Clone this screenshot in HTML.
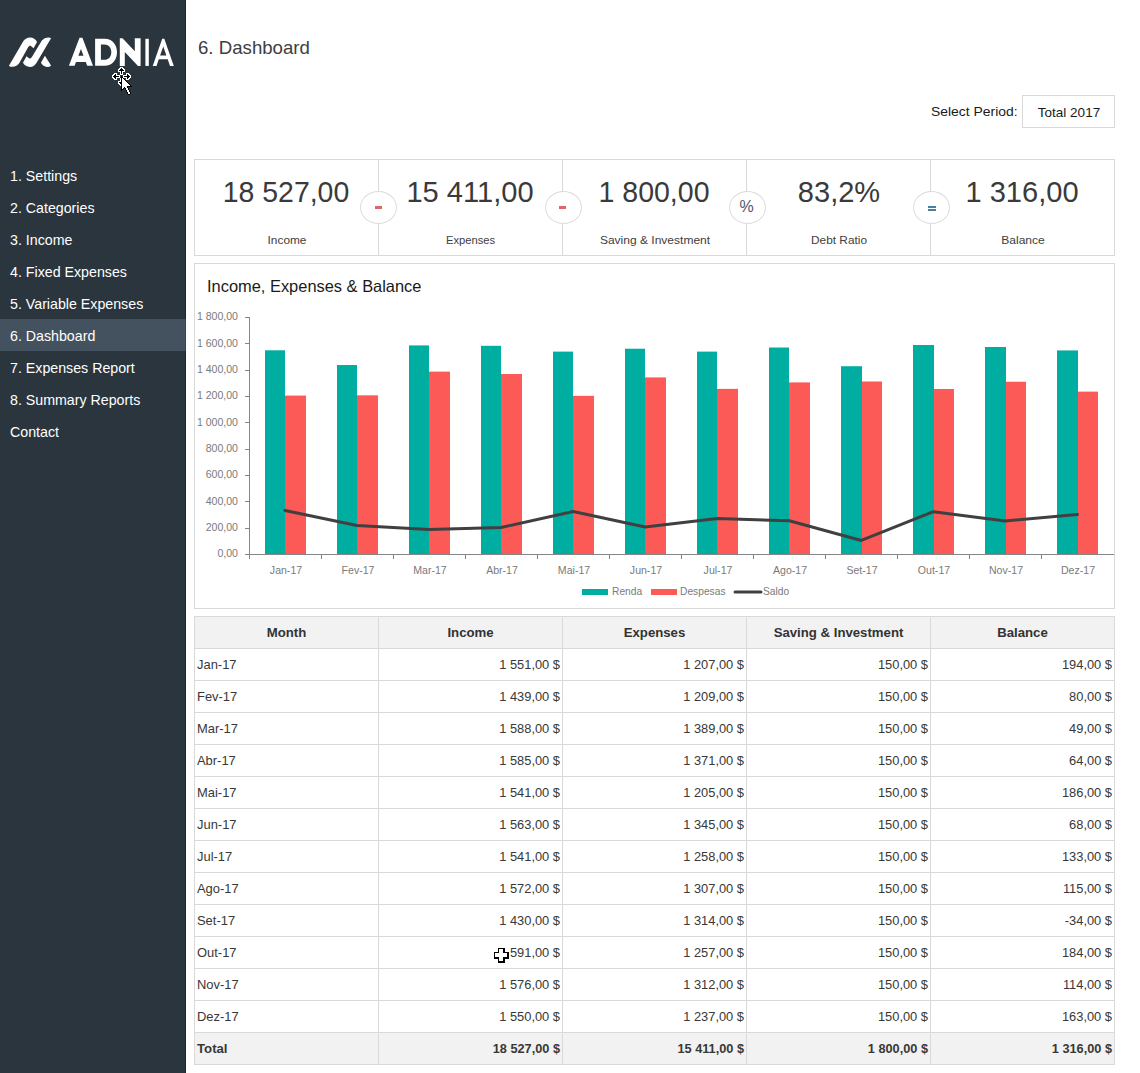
<!DOCTYPE html>
<html><head><meta charset="utf-8"><title>Dashboard</title>
<style>
html,body{margin:0;padding:0;}
body{width:1140px;height:1073px;position:relative;overflow:hidden;background:#ffffff;font-family:"Liberation Sans", sans-serif;}
.t{position:absolute;white-space:nowrap;font-family:"Liberation Sans", sans-serif;}
.box{position:absolute;border:1px solid #d9d9d9;background:transparent;}
</style></head><body>
<div style="position:absolute;left:0;top:0;width:186px;height:1073px;background:#2b353e"></div>
<div style="position:absolute;left:185px;top:0;width:1px;height:1073px;background:#1f2831"></div>
<div style="position:absolute;left:0;top:319px;width:185px;height:32px;background:#44525f"></div>
<div style="position:absolute;left:185px;top:319px;width:1px;height:32px;background:#34475a"></div>
<div class="t" style="left:10.00px;top:168.73px;width:600px;text-align:left;font-size:14.5px;line-height:14.5px;color:#ffffff;font-weight:normal;transform:scaleX(0.98);transform-origin:left 0;">1. Settings</div>
<div class="t" style="left:10.00px;top:200.73px;width:600px;text-align:left;font-size:14.5px;line-height:14.5px;color:#ffffff;font-weight:normal;transform:scaleX(0.98);transform-origin:left 0;">2. Categories</div>
<div class="t" style="left:10.00px;top:232.73px;width:600px;text-align:left;font-size:14.5px;line-height:14.5px;color:#ffffff;font-weight:normal;transform:scaleX(0.98);transform-origin:left 0;">3. Income</div>
<div class="t" style="left:10.00px;top:264.73px;width:600px;text-align:left;font-size:14.5px;line-height:14.5px;color:#ffffff;font-weight:normal;transform:scaleX(0.98);transform-origin:left 0;">4. Fixed Expenses</div>
<div class="t" style="left:10.00px;top:296.73px;width:600px;text-align:left;font-size:14.5px;line-height:14.5px;color:#ffffff;font-weight:normal;transform:scaleX(0.98);transform-origin:left 0;">5. Variable Expenses</div>
<div class="t" style="left:10.00px;top:328.73px;width:600px;text-align:left;font-size:14.5px;line-height:14.5px;color:#ffffff;font-weight:normal;transform:scaleX(0.98);transform-origin:left 0;">6. Dashboard</div>
<div class="t" style="left:10.00px;top:360.73px;width:600px;text-align:left;font-size:14.5px;line-height:14.5px;color:#ffffff;font-weight:normal;transform:scaleX(0.98);transform-origin:left 0;">7. Expenses Report</div>
<div class="t" style="left:10.00px;top:392.73px;width:600px;text-align:left;font-size:14.5px;line-height:14.5px;color:#ffffff;font-weight:normal;transform:scaleX(0.98);transform-origin:left 0;">8. Summary Reports</div>
<div class="t" style="left:10.00px;top:424.73px;width:600px;text-align:left;font-size:14.5px;line-height:14.5px;color:#ffffff;font-weight:normal;transform:scaleX(0.98);transform-origin:left 0;">Contact</div>
<svg style="position:absolute;left:0;top:0" width="186" height="110" viewBox="0 0 186 110">
<g fill="#ffffff">
<g transform="translate(5,33) scale(0.04386)">
<path d="M90,745 L420,185 Q480,105 570,105 Q680,110 730,205 L650,350 L585,292 L560,290 L530,318 L330,680 Q270,770 170,772 Q110,772 90,745 Z"/>
<path d="M1050,120 L730,660 Q670,772 570,775 Q460,772 410,680 L490,530 L555,582 L580,582 L610,552 L840,170 Q900,105 980,105 Q1040,105 1050,120 Z"/>
<path d="M910,520 L1050,740 Q1030,775 960,775 Q870,770 820,680 Z"/>
</g>
<path fill-rule="evenodd" d="M68.9,65.8 L79.5,37.8 L82.4,37.8 L93,65.8 L87.2,65.8 L85.8,62 L76.0,62 L74.6,65.8 Z M78.4,55.7 L80.95,49.1 L83.5,55.7 Z"/>
<path fill-rule="evenodd" d="M95.1,38.8 L104.5,38.8 C112.5,38.8 117,45 117,52.3 C117,59.6 112.5,65.8 104.5,65.8 L95.1,65.8 Z M100.9,44.6 L104.2,44.6 C108.8,44.6 111.3,48 111.3,52.2 C111.3,56.5 108.8,59.8 104.2,59.8 L100.9,59.8 Z"/>
<path d="M119.8,65.9 L119.8,38.3 L122.5,38.3 L134.8,51.3 L134.8,38.3 L140.6,38.3 L140.6,65.9 L138,65.9 L124.8,52 L124.8,65.9 Z"/>
<rect x="145.4" y="38.8" width="3.4" height="27.1"/>
<path fill-rule="evenodd" d="M152.7,65.9 L162.2,38.8 L164.3,38.8 L173.8,65.9 L170,65.9 L167.7,59.3 L158.8,59.3 L156.5,65.9 Z M160.1,55.6 L163.25,46.6 L166.4,55.6 Z"/>
</g>
</svg>
<div class="t" style="left:198.00px;top:39.09px;width:600px;text-align:left;font-size:18.2px;line-height:18.2px;color:#404040;font-weight:normal;transform:scaleX(1.025);transform-origin:left 0;">6. Dashboard</div>
<div class="t" style="left:930.50px;top:104.57px;width:600px;text-align:left;font-size:13.5px;line-height:13.5px;color:#1a1a1a;font-weight:normal;transform:scaleX(1.03);transform-origin:left 0;">Select Period:</div>
<div class="box" style="left:1022px;top:95px;width:91px;height:31px"></div>
<div class="t" style="left:769.00px;top:105.57px;width:600px;text-align:center;font-size:13.5px;line-height:13.5px;color:#1a1a1a;font-weight:normal;">Total 2017</div>
<div class="box" style="left:194px;top:159px;width:919px;height:95px"></div>
<div style="position:absolute;left:378px;top:160px;width:1px;height:95px;background:#d9d9d9"></div>
<div style="position:absolute;left:562px;top:160px;width:1px;height:95px;background:#d9d9d9"></div>
<div style="position:absolute;left:746px;top:160px;width:1px;height:95px;background:#d9d9d9"></div>
<div style="position:absolute;left:930px;top:160px;width:1px;height:95px;background:#d9d9d9"></div>
<div class="t" style="left:-14.00px;top:177.03px;width:600px;text-align:center;font-size:29.5px;line-height:29.5px;color:#3a3a3a;font-weight:normal;transform:scaleX(0.964);transform-origin:center 0;">18 527,00</div>
<div class="t" style="left:-13.50px;top:234.52px;width:600px;text-align:center;font-size:11.2px;line-height:11.2px;color:#404040;font-weight:normal;transform:scaleX(1.06);transform-origin:center 0;">Income</div>
<div class="t" style="left:170.00px;top:177.03px;width:600px;text-align:center;font-size:29.5px;line-height:29.5px;color:#3a3a3a;font-weight:normal;transform:scaleX(0.985);transform-origin:center 0;">15 411,00</div>
<div class="t" style="left:170.50px;top:234.52px;width:600px;text-align:center;font-size:11.2px;line-height:11.2px;color:#404040;font-weight:normal;">Expenses</div>
<div class="t" style="left:353.80px;top:177.03px;width:600px;text-align:center;font-size:29.5px;line-height:29.5px;color:#3a3a3a;font-weight:normal;transform:scaleX(0.967);transform-origin:center 0;">1 800,00</div>
<div class="t" style="left:354.50px;top:234.52px;width:600px;text-align:center;font-size:11.2px;line-height:11.2px;color:#404040;font-weight:normal;transform:scaleX(1.074);transform-origin:center 0;">Saving &amp; Investment</div>
<div class="t" style="left:538.80px;top:177.03px;width:600px;text-align:center;font-size:29.5px;line-height:29.5px;color:#3a3a3a;font-weight:normal;transform:scaleX(0.984);transform-origin:center 0;">83,2%</div>
<div class="t" style="left:538.50px;top:234.52px;width:600px;text-align:center;font-size:11.2px;line-height:11.2px;color:#404040;font-weight:normal;transform:scaleX(1.06);transform-origin:center 0;">Debt Ratio</div>
<div class="t" style="left:722.00px;top:177.03px;width:600px;text-align:center;font-size:29.5px;line-height:29.5px;color:#3a3a3a;font-weight:normal;transform:scaleX(0.985);transform-origin:center 0;">1 316,00</div>
<div class="t" style="left:722.50px;top:234.52px;width:600px;text-align:center;font-size:11.2px;line-height:11.2px;color:#404040;font-weight:normal;transform:scaleX(1.08);transform-origin:center 0;">Balance</div>
<div style="position:absolute;left:360.0px;top:191px;width:35px;height:31px;border:1px solid #dcdcdc;border-radius:50%;background:#fff"></div>
<div style="position:absolute;left:544.5px;top:191px;width:35px;height:31px;border:1px solid #dcdcdc;border-radius:50%;background:#fff"></div>
<div style="position:absolute;left:728.5px;top:191px;width:35px;height:31px;border:1px solid #dcdcdc;border-radius:50%;background:#fff"></div>
<div style="position:absolute;left:913.0px;top:191px;width:35px;height:31px;border:1px solid #dcdcdc;border-radius:50%;background:#fff"></div>
<div style="position:absolute;left:375px;top:206px;width:7px;height:3px;background:#e06666"></div>
<div style="position:absolute;left:559px;top:206px;width:7px;height:3px;background:#e06666"></div>
<div class="t" style="left:446.50px;top:199.06px;width:600px;text-align:center;font-size:16px;line-height:16px;color:#505866;font-weight:normal;">%</div>
<div style="position:absolute;left:928px;top:206px;width:8px;height:2px;background:#4a7fa5"></div>
<div style="position:absolute;left:928px;top:209px;width:8px;height:2px;background:#4a7fa5"></div>
<div class="box" style="left:194px;top:263px;width:919px;height:344px"></div>
<div class="t" style="left:207.00px;top:278.03px;width:600px;text-align:left;font-size:16.5px;line-height:16.5px;color:#1a1a1a;font-weight:normal;transform:scaleX(0.995);transform-origin:left 0;">Income, Expenses &amp; Balance</div>
<svg style="position:absolute;left:0;top:0" width="1140" height="1073">
<rect x="265" y="350.29" width="20" height="204.21" fill="#00ada1"/>
<rect x="285" y="395.58" width="21" height="158.92" fill="#fc5a56"/>
<rect x="337" y="365.03" width="20" height="189.47" fill="#00ada1"/>
<rect x="357" y="395.32" width="21" height="159.18" fill="#fc5a56"/>
<rect x="409" y="345.41" width="20" height="209.09" fill="#00ada1"/>
<rect x="429" y="371.62" width="21" height="182.88" fill="#fc5a56"/>
<rect x="481" y="345.81" width="20" height="208.69" fill="#00ada1"/>
<rect x="501" y="373.99" width="21" height="180.51" fill="#fc5a56"/>
<rect x="553" y="351.60" width="20" height="202.90" fill="#00ada1"/>
<rect x="573" y="395.84" width="21" height="158.66" fill="#fc5a56"/>
<rect x="625" y="348.71" width="20" height="205.79" fill="#00ada1"/>
<rect x="645" y="377.41" width="21" height="177.09" fill="#fc5a56"/>
<rect x="697" y="351.60" width="20" height="202.90" fill="#00ada1"/>
<rect x="717" y="388.86" width="21" height="165.64" fill="#fc5a56"/>
<rect x="769" y="347.52" width="20" height="206.98" fill="#00ada1"/>
<rect x="789" y="382.41" width="21" height="172.09" fill="#fc5a56"/>
<rect x="841" y="366.22" width="21" height="188.28" fill="#00ada1"/>
<rect x="862" y="381.49" width="20" height="173.01" fill="#fc5a56"/>
<rect x="913" y="345.02" width="21" height="209.48" fill="#00ada1"/>
<rect x="934" y="389.00" width="20" height="165.50" fill="#fc5a56"/>
<rect x="985" y="346.99" width="21" height="207.51" fill="#00ada1"/>
<rect x="1006" y="381.75" width="20" height="172.75" fill="#fc5a56"/>
<rect x="1057" y="350.42" width="21" height="204.08" fill="#00ada1"/>
<rect x="1078" y="391.63" width="20" height="162.87" fill="#fc5a56"/>
<line x1="249.5" y1="317" x2="249.5" y2="554.5" stroke="#868686" stroke-width="1"/>
<line x1="245" y1="554.5" x2="1114" y2="554.5" stroke="#868686" stroke-width="1"/>
<line x1="245" y1="554.5" x2="249.5" y2="554.5" stroke="#868686" stroke-width="1"/>
<line x1="245" y1="528.5" x2="249.5" y2="528.5" stroke="#868686" stroke-width="1"/>
<line x1="245" y1="501.5" x2="249.5" y2="501.5" stroke="#868686" stroke-width="1"/>
<line x1="245" y1="475.5" x2="249.5" y2="475.5" stroke="#868686" stroke-width="1"/>
<line x1="245" y1="449.5" x2="249.5" y2="449.5" stroke="#868686" stroke-width="1"/>
<line x1="245" y1="422.5" x2="249.5" y2="422.5" stroke="#868686" stroke-width="1"/>
<line x1="245" y1="396.5" x2="249.5" y2="396.5" stroke="#868686" stroke-width="1"/>
<line x1="245" y1="370.5" x2="249.5" y2="370.5" stroke="#868686" stroke-width="1"/>
<line x1="245" y1="343.5" x2="249.5" y2="343.5" stroke="#868686" stroke-width="1"/>
<line x1="245" y1="317.5" x2="249.5" y2="317.5" stroke="#868686" stroke-width="1"/>
<line x1="249.5" y1="554.5" x2="249.5" y2="559" stroke="#868686" stroke-width="1"/>
<line x1="321.5" y1="554.5" x2="321.5" y2="559" stroke="#868686" stroke-width="1"/>
<line x1="393.5" y1="554.5" x2="393.5" y2="559" stroke="#868686" stroke-width="1"/>
<line x1="465.5" y1="554.5" x2="465.5" y2="559" stroke="#868686" stroke-width="1"/>
<line x1="537.5" y1="554.5" x2="537.5" y2="559" stroke="#868686" stroke-width="1"/>
<line x1="609.5" y1="554.5" x2="609.5" y2="559" stroke="#868686" stroke-width="1"/>
<line x1="681.5" y1="554.5" x2="681.5" y2="559" stroke="#868686" stroke-width="1"/>
<line x1="753.5" y1="554.5" x2="753.5" y2="559" stroke="#868686" stroke-width="1"/>
<line x1="825.5" y1="554.5" x2="825.5" y2="559" stroke="#868686" stroke-width="1"/>
<line x1="897.5" y1="554.5" x2="897.5" y2="559" stroke="#868686" stroke-width="1"/>
<line x1="969.5" y1="554.5" x2="969.5" y2="559" stroke="#868686" stroke-width="1"/>
<line x1="1041.5" y1="554.5" x2="1041.5" y2="559" stroke="#868686" stroke-width="1"/>
<polyline points="285.00,510.41 357.04,525.42 429.08,529.50 501.12,527.52 573.16,511.46 645.20,527.00 717.24,518.44 789.28,520.81 861.32,540.43 933.36,511.72 1005.40,520.94 1077.44,514.49" fill="none" stroke="#404040" stroke-width="3" stroke-linejoin="round" stroke-linecap="round"/>
<rect x="582" y="589" width="26" height="6" fill="#00ada1"/>
<rect x="651" y="589" width="26" height="6" fill="#fc5a56"/>
<line x1="735" y1="592" x2="761" y2="592" stroke="#404040" stroke-width="3" stroke-linecap="round"/>
</svg>
<div class="t" style="left:-362.00px;top:548.49px;width:600px;text-align:right;font-size:11px;line-height:11px;color:#7a7a7a;font-weight:normal;transform:scaleX(0.96);transform-origin:right 0;">0,00</div>
<div class="t" style="left:-362.00px;top:522.16px;width:600px;text-align:right;font-size:11px;line-height:11px;color:#7a7a7a;font-weight:normal;transform:scaleX(0.96);transform-origin:right 0;">200,00</div>
<div class="t" style="left:-362.00px;top:495.82px;width:600px;text-align:right;font-size:11px;line-height:11px;color:#7a7a7a;font-weight:normal;transform:scaleX(0.96);transform-origin:right 0;">400,00</div>
<div class="t" style="left:-362.00px;top:469.49px;width:600px;text-align:right;font-size:11px;line-height:11px;color:#7a7a7a;font-weight:normal;transform:scaleX(0.96);transform-origin:right 0;">600,00</div>
<div class="t" style="left:-362.00px;top:443.16px;width:600px;text-align:right;font-size:11px;line-height:11px;color:#7a7a7a;font-weight:normal;transform:scaleX(0.96);transform-origin:right 0;">800,00</div>
<div class="t" style="left:-362.00px;top:416.82px;width:600px;text-align:right;font-size:11px;line-height:11px;color:#7a7a7a;font-weight:normal;transform:scaleX(0.96);transform-origin:right 0;">1 000,00</div>
<div class="t" style="left:-362.00px;top:390.49px;width:600px;text-align:right;font-size:11px;line-height:11px;color:#7a7a7a;font-weight:normal;transform:scaleX(0.96);transform-origin:right 0;">1 200,00</div>
<div class="t" style="left:-362.00px;top:364.16px;width:600px;text-align:right;font-size:11px;line-height:11px;color:#7a7a7a;font-weight:normal;transform:scaleX(0.96);transform-origin:right 0;">1 400,00</div>
<div class="t" style="left:-362.00px;top:337.82px;width:600px;text-align:right;font-size:11px;line-height:11px;color:#7a7a7a;font-weight:normal;transform:scaleX(0.96);transform-origin:right 0;">1 600,00</div>
<div class="t" style="left:-362.00px;top:311.49px;width:600px;text-align:right;font-size:11px;line-height:11px;color:#7a7a7a;font-weight:normal;transform:scaleX(0.96);transform-origin:right 0;">1 800,00</div>
<div class="t" style="left:-14.50px;top:564.69px;width:600px;text-align:center;font-size:11px;line-height:11px;color:#7a7a7a;font-weight:normal;transform:scaleX(0.96);transform-origin:center 0;">Jan-17</div>
<div class="t" style="left:57.54px;top:564.69px;width:600px;text-align:center;font-size:11px;line-height:11px;color:#7a7a7a;font-weight:normal;transform:scaleX(0.96);transform-origin:center 0;">Fev-17</div>
<div class="t" style="left:129.58px;top:564.69px;width:600px;text-align:center;font-size:11px;line-height:11px;color:#7a7a7a;font-weight:normal;transform:scaleX(0.96);transform-origin:center 0;">Mar-17</div>
<div class="t" style="left:201.62px;top:564.69px;width:600px;text-align:center;font-size:11px;line-height:11px;color:#7a7a7a;font-weight:normal;transform:scaleX(0.96);transform-origin:center 0;">Abr-17</div>
<div class="t" style="left:273.66px;top:564.69px;width:600px;text-align:center;font-size:11px;line-height:11px;color:#7a7a7a;font-weight:normal;transform:scaleX(0.96);transform-origin:center 0;">Mai-17</div>
<div class="t" style="left:345.70px;top:564.69px;width:600px;text-align:center;font-size:11px;line-height:11px;color:#7a7a7a;font-weight:normal;transform:scaleX(0.96);transform-origin:center 0;">Jun-17</div>
<div class="t" style="left:417.74px;top:564.69px;width:600px;text-align:center;font-size:11px;line-height:11px;color:#7a7a7a;font-weight:normal;transform:scaleX(0.96);transform-origin:center 0;">Jul-17</div>
<div class="t" style="left:489.78px;top:564.69px;width:600px;text-align:center;font-size:11px;line-height:11px;color:#7a7a7a;font-weight:normal;transform:scaleX(0.96);transform-origin:center 0;">Ago-17</div>
<div class="t" style="left:561.82px;top:564.69px;width:600px;text-align:center;font-size:11px;line-height:11px;color:#7a7a7a;font-weight:normal;transform:scaleX(0.96);transform-origin:center 0;">Set-17</div>
<div class="t" style="left:633.86px;top:564.69px;width:600px;text-align:center;font-size:11px;line-height:11px;color:#7a7a7a;font-weight:normal;transform:scaleX(0.96);transform-origin:center 0;">Out-17</div>
<div class="t" style="left:705.90px;top:564.69px;width:600px;text-align:center;font-size:11px;line-height:11px;color:#7a7a7a;font-weight:normal;transform:scaleX(0.96);transform-origin:center 0;">Nov-17</div>
<div class="t" style="left:777.94px;top:564.69px;width:600px;text-align:center;font-size:11px;line-height:11px;color:#7a7a7a;font-weight:normal;transform:scaleX(0.96);transform-origin:center 0;">Dez-17</div>
<div class="t" style="left:611.50px;top:585.69px;width:600px;text-align:left;font-size:11px;line-height:11px;color:#7a7a7a;font-weight:normal;transform:scaleX(0.93);transform-origin:left 0;">Renda</div>
<div class="t" style="left:679.50px;top:585.69px;width:600px;text-align:left;font-size:11px;line-height:11px;color:#7a7a7a;font-weight:normal;transform:scaleX(0.93);transform-origin:left 0;">Despesas</div>
<div class="t" style="left:763.00px;top:585.69px;width:600px;text-align:left;font-size:11px;line-height:11px;color:#7a7a7a;font-weight:normal;transform:scaleX(0.93);transform-origin:left 0;">Saldo</div>
<div style="position:absolute;left:195px;top:617px;width:919px;height:31px;background:#f2f2f2"></div>
<div style="position:absolute;left:195px;top:1033px;width:919px;height:31px;background:#f2f2f2"></div>
<div style="position:absolute;left:194px;top:616px;width:921px;height:1px;background:#d9d9d9"></div>
<div style="position:absolute;left:194px;top:648px;width:921px;height:1px;background:#d9d9d9"></div>
<div style="position:absolute;left:194px;top:680px;width:921px;height:1px;background:#d9d9d9"></div>
<div style="position:absolute;left:194px;top:712px;width:921px;height:1px;background:#d9d9d9"></div>
<div style="position:absolute;left:194px;top:744px;width:921px;height:1px;background:#d9d9d9"></div>
<div style="position:absolute;left:194px;top:776px;width:921px;height:1px;background:#d9d9d9"></div>
<div style="position:absolute;left:194px;top:808px;width:921px;height:1px;background:#d9d9d9"></div>
<div style="position:absolute;left:194px;top:840px;width:921px;height:1px;background:#d9d9d9"></div>
<div style="position:absolute;left:194px;top:872px;width:921px;height:1px;background:#d9d9d9"></div>
<div style="position:absolute;left:194px;top:904px;width:921px;height:1px;background:#d9d9d9"></div>
<div style="position:absolute;left:194px;top:936px;width:921px;height:1px;background:#d9d9d9"></div>
<div style="position:absolute;left:194px;top:968px;width:921px;height:1px;background:#d9d9d9"></div>
<div style="position:absolute;left:194px;top:1000px;width:921px;height:1px;background:#d9d9d9"></div>
<div style="position:absolute;left:194px;top:1032px;width:921px;height:1px;background:#d9d9d9"></div>
<div style="position:absolute;left:194px;top:1064px;width:921px;height:1px;background:#d9d9d9"></div>
<div style="position:absolute;left:194px;top:616px;width:1px;height:449px;background:#d9d9d9"></div>
<div style="position:absolute;left:378px;top:616px;width:1px;height:449px;background:#d9d9d9"></div>
<div style="position:absolute;left:562px;top:616px;width:1px;height:449px;background:#d9d9d9"></div>
<div style="position:absolute;left:746px;top:616px;width:1px;height:449px;background:#d9d9d9"></div>
<div style="position:absolute;left:930px;top:616px;width:1px;height:449px;background:#d9d9d9"></div>
<div style="position:absolute;left:1114px;top:616px;width:1px;height:449px;background:#d9d9d9"></div>
<div class="t" style="left:-13.50px;top:625.83px;width:600px;text-align:center;font-size:13.2px;line-height:13.2px;color:#333333;font-weight:bold;">Month</div>
<div class="t" style="left:170.50px;top:625.83px;width:600px;text-align:center;font-size:13.2px;line-height:13.2px;color:#333333;font-weight:bold;">Income</div>
<div class="t" style="left:354.50px;top:625.83px;width:600px;text-align:center;font-size:13.2px;line-height:13.2px;color:#333333;font-weight:bold;">Expenses</div>
<div class="t" style="left:538.50px;top:625.83px;width:600px;text-align:center;font-size:13.2px;line-height:13.2px;color:#333333;font-weight:bold;">Saving &amp; Investment</div>
<div class="t" style="left:722.50px;top:625.83px;width:600px;text-align:center;font-size:13.2px;line-height:13.2px;color:#333333;font-weight:bold;">Balance</div>
<div class="t" style="left:197.00px;top:657.83px;width:600px;text-align:left;font-size:13.2px;line-height:13.2px;color:#383838;font-weight:normal;transform:scaleX(0.98);transform-origin:left 0;">Jan-17</div>
<div class="t" style="left:-39.70px;top:657.83px;width:600px;text-align:right;font-size:13.2px;line-height:13.2px;color:#383838;font-weight:normal;transform:scaleX(0.975);transform-origin:right 0;">1 551,00 $</div>
<div class="t" style="left:144.30px;top:657.83px;width:600px;text-align:right;font-size:13.2px;line-height:13.2px;color:#383838;font-weight:normal;transform:scaleX(0.975);transform-origin:right 0;">1 207,00 $</div>
<div class="t" style="left:328.30px;top:657.83px;width:600px;text-align:right;font-size:13.2px;line-height:13.2px;color:#383838;font-weight:normal;transform:scaleX(0.975);transform-origin:right 0;">150,00 $</div>
<div class="t" style="left:512.30px;top:657.83px;width:600px;text-align:right;font-size:13.2px;line-height:13.2px;color:#383838;font-weight:normal;transform:scaleX(0.975);transform-origin:right 0;">194,00 $</div>
<div class="t" style="left:197.00px;top:689.83px;width:600px;text-align:left;font-size:13.2px;line-height:13.2px;color:#383838;font-weight:normal;transform:scaleX(0.98);transform-origin:left 0;">Fev-17</div>
<div class="t" style="left:-39.70px;top:689.83px;width:600px;text-align:right;font-size:13.2px;line-height:13.2px;color:#383838;font-weight:normal;transform:scaleX(0.975);transform-origin:right 0;">1 439,00 $</div>
<div class="t" style="left:144.30px;top:689.83px;width:600px;text-align:right;font-size:13.2px;line-height:13.2px;color:#383838;font-weight:normal;transform:scaleX(0.975);transform-origin:right 0;">1 209,00 $</div>
<div class="t" style="left:328.30px;top:689.83px;width:600px;text-align:right;font-size:13.2px;line-height:13.2px;color:#383838;font-weight:normal;transform:scaleX(0.975);transform-origin:right 0;">150,00 $</div>
<div class="t" style="left:512.30px;top:689.83px;width:600px;text-align:right;font-size:13.2px;line-height:13.2px;color:#383838;font-weight:normal;transform:scaleX(0.975);transform-origin:right 0;">80,00 $</div>
<div class="t" style="left:197.00px;top:721.83px;width:600px;text-align:left;font-size:13.2px;line-height:13.2px;color:#383838;font-weight:normal;transform:scaleX(0.98);transform-origin:left 0;">Mar-17</div>
<div class="t" style="left:-39.70px;top:721.83px;width:600px;text-align:right;font-size:13.2px;line-height:13.2px;color:#383838;font-weight:normal;transform:scaleX(0.975);transform-origin:right 0;">1 588,00 $</div>
<div class="t" style="left:144.30px;top:721.83px;width:600px;text-align:right;font-size:13.2px;line-height:13.2px;color:#383838;font-weight:normal;transform:scaleX(0.975);transform-origin:right 0;">1 389,00 $</div>
<div class="t" style="left:328.30px;top:721.83px;width:600px;text-align:right;font-size:13.2px;line-height:13.2px;color:#383838;font-weight:normal;transform:scaleX(0.975);transform-origin:right 0;">150,00 $</div>
<div class="t" style="left:512.30px;top:721.83px;width:600px;text-align:right;font-size:13.2px;line-height:13.2px;color:#383838;font-weight:normal;transform:scaleX(0.975);transform-origin:right 0;">49,00 $</div>
<div class="t" style="left:197.00px;top:753.83px;width:600px;text-align:left;font-size:13.2px;line-height:13.2px;color:#383838;font-weight:normal;transform:scaleX(0.98);transform-origin:left 0;">Abr-17</div>
<div class="t" style="left:-39.70px;top:753.83px;width:600px;text-align:right;font-size:13.2px;line-height:13.2px;color:#383838;font-weight:normal;transform:scaleX(0.975);transform-origin:right 0;">1 585,00 $</div>
<div class="t" style="left:144.30px;top:753.83px;width:600px;text-align:right;font-size:13.2px;line-height:13.2px;color:#383838;font-weight:normal;transform:scaleX(0.975);transform-origin:right 0;">1 371,00 $</div>
<div class="t" style="left:328.30px;top:753.83px;width:600px;text-align:right;font-size:13.2px;line-height:13.2px;color:#383838;font-weight:normal;transform:scaleX(0.975);transform-origin:right 0;">150,00 $</div>
<div class="t" style="left:512.30px;top:753.83px;width:600px;text-align:right;font-size:13.2px;line-height:13.2px;color:#383838;font-weight:normal;transform:scaleX(0.975);transform-origin:right 0;">64,00 $</div>
<div class="t" style="left:197.00px;top:785.83px;width:600px;text-align:left;font-size:13.2px;line-height:13.2px;color:#383838;font-weight:normal;transform:scaleX(0.98);transform-origin:left 0;">Mai-17</div>
<div class="t" style="left:-39.70px;top:785.83px;width:600px;text-align:right;font-size:13.2px;line-height:13.2px;color:#383838;font-weight:normal;transform:scaleX(0.975);transform-origin:right 0;">1 541,00 $</div>
<div class="t" style="left:144.30px;top:785.83px;width:600px;text-align:right;font-size:13.2px;line-height:13.2px;color:#383838;font-weight:normal;transform:scaleX(0.975);transform-origin:right 0;">1 205,00 $</div>
<div class="t" style="left:328.30px;top:785.83px;width:600px;text-align:right;font-size:13.2px;line-height:13.2px;color:#383838;font-weight:normal;transform:scaleX(0.975);transform-origin:right 0;">150,00 $</div>
<div class="t" style="left:512.30px;top:785.83px;width:600px;text-align:right;font-size:13.2px;line-height:13.2px;color:#383838;font-weight:normal;transform:scaleX(0.975);transform-origin:right 0;">186,00 $</div>
<div class="t" style="left:197.00px;top:817.83px;width:600px;text-align:left;font-size:13.2px;line-height:13.2px;color:#383838;font-weight:normal;transform:scaleX(0.98);transform-origin:left 0;">Jun-17</div>
<div class="t" style="left:-39.70px;top:817.83px;width:600px;text-align:right;font-size:13.2px;line-height:13.2px;color:#383838;font-weight:normal;transform:scaleX(0.975);transform-origin:right 0;">1 563,00 $</div>
<div class="t" style="left:144.30px;top:817.83px;width:600px;text-align:right;font-size:13.2px;line-height:13.2px;color:#383838;font-weight:normal;transform:scaleX(0.975);transform-origin:right 0;">1 345,00 $</div>
<div class="t" style="left:328.30px;top:817.83px;width:600px;text-align:right;font-size:13.2px;line-height:13.2px;color:#383838;font-weight:normal;transform:scaleX(0.975);transform-origin:right 0;">150,00 $</div>
<div class="t" style="left:512.30px;top:817.83px;width:600px;text-align:right;font-size:13.2px;line-height:13.2px;color:#383838;font-weight:normal;transform:scaleX(0.975);transform-origin:right 0;">68,00 $</div>
<div class="t" style="left:197.00px;top:849.83px;width:600px;text-align:left;font-size:13.2px;line-height:13.2px;color:#383838;font-weight:normal;transform:scaleX(0.98);transform-origin:left 0;">Jul-17</div>
<div class="t" style="left:-39.70px;top:849.83px;width:600px;text-align:right;font-size:13.2px;line-height:13.2px;color:#383838;font-weight:normal;transform:scaleX(0.975);transform-origin:right 0;">1 541,00 $</div>
<div class="t" style="left:144.30px;top:849.83px;width:600px;text-align:right;font-size:13.2px;line-height:13.2px;color:#383838;font-weight:normal;transform:scaleX(0.975);transform-origin:right 0;">1 258,00 $</div>
<div class="t" style="left:328.30px;top:849.83px;width:600px;text-align:right;font-size:13.2px;line-height:13.2px;color:#383838;font-weight:normal;transform:scaleX(0.975);transform-origin:right 0;">150,00 $</div>
<div class="t" style="left:512.30px;top:849.83px;width:600px;text-align:right;font-size:13.2px;line-height:13.2px;color:#383838;font-weight:normal;transform:scaleX(0.975);transform-origin:right 0;">133,00 $</div>
<div class="t" style="left:197.00px;top:881.83px;width:600px;text-align:left;font-size:13.2px;line-height:13.2px;color:#383838;font-weight:normal;transform:scaleX(0.98);transform-origin:left 0;">Ago-17</div>
<div class="t" style="left:-39.70px;top:881.83px;width:600px;text-align:right;font-size:13.2px;line-height:13.2px;color:#383838;font-weight:normal;transform:scaleX(0.975);transform-origin:right 0;">1 572,00 $</div>
<div class="t" style="left:144.30px;top:881.83px;width:600px;text-align:right;font-size:13.2px;line-height:13.2px;color:#383838;font-weight:normal;transform:scaleX(0.975);transform-origin:right 0;">1 307,00 $</div>
<div class="t" style="left:328.30px;top:881.83px;width:600px;text-align:right;font-size:13.2px;line-height:13.2px;color:#383838;font-weight:normal;transform:scaleX(0.975);transform-origin:right 0;">150,00 $</div>
<div class="t" style="left:512.30px;top:881.83px;width:600px;text-align:right;font-size:13.2px;line-height:13.2px;color:#383838;font-weight:normal;transform:scaleX(0.975);transform-origin:right 0;">115,00 $</div>
<div class="t" style="left:197.00px;top:913.83px;width:600px;text-align:left;font-size:13.2px;line-height:13.2px;color:#383838;font-weight:normal;transform:scaleX(0.98);transform-origin:left 0;">Set-17</div>
<div class="t" style="left:-39.70px;top:913.83px;width:600px;text-align:right;font-size:13.2px;line-height:13.2px;color:#383838;font-weight:normal;transform:scaleX(0.975);transform-origin:right 0;">1 430,00 $</div>
<div class="t" style="left:144.30px;top:913.83px;width:600px;text-align:right;font-size:13.2px;line-height:13.2px;color:#383838;font-weight:normal;transform:scaleX(0.975);transform-origin:right 0;">1 314,00 $</div>
<div class="t" style="left:328.30px;top:913.83px;width:600px;text-align:right;font-size:13.2px;line-height:13.2px;color:#383838;font-weight:normal;transform:scaleX(0.975);transform-origin:right 0;">150,00 $</div>
<div class="t" style="left:512.30px;top:913.83px;width:600px;text-align:right;font-size:13.2px;line-height:13.2px;color:#383838;font-weight:normal;transform:scaleX(0.975);transform-origin:right 0;">-34,00 $</div>
<div class="t" style="left:197.00px;top:945.83px;width:600px;text-align:left;font-size:13.2px;line-height:13.2px;color:#383838;font-weight:normal;transform:scaleX(0.98);transform-origin:left 0;">Out-17</div>
<div class="t" style="left:-39.70px;top:945.83px;width:600px;text-align:right;font-size:13.2px;line-height:13.2px;color:#383838;font-weight:normal;transform:scaleX(0.975);transform-origin:right 0;">1 591,00 $</div>
<div class="t" style="left:144.30px;top:945.83px;width:600px;text-align:right;font-size:13.2px;line-height:13.2px;color:#383838;font-weight:normal;transform:scaleX(0.975);transform-origin:right 0;">1 257,00 $</div>
<div class="t" style="left:328.30px;top:945.83px;width:600px;text-align:right;font-size:13.2px;line-height:13.2px;color:#383838;font-weight:normal;transform:scaleX(0.975);transform-origin:right 0;">150,00 $</div>
<div class="t" style="left:512.30px;top:945.83px;width:600px;text-align:right;font-size:13.2px;line-height:13.2px;color:#383838;font-weight:normal;transform:scaleX(0.975);transform-origin:right 0;">184,00 $</div>
<div class="t" style="left:197.00px;top:977.83px;width:600px;text-align:left;font-size:13.2px;line-height:13.2px;color:#383838;font-weight:normal;transform:scaleX(0.98);transform-origin:left 0;">Nov-17</div>
<div class="t" style="left:-39.70px;top:977.83px;width:600px;text-align:right;font-size:13.2px;line-height:13.2px;color:#383838;font-weight:normal;transform:scaleX(0.975);transform-origin:right 0;">1 576,00 $</div>
<div class="t" style="left:144.30px;top:977.83px;width:600px;text-align:right;font-size:13.2px;line-height:13.2px;color:#383838;font-weight:normal;transform:scaleX(0.975);transform-origin:right 0;">1 312,00 $</div>
<div class="t" style="left:328.30px;top:977.83px;width:600px;text-align:right;font-size:13.2px;line-height:13.2px;color:#383838;font-weight:normal;transform:scaleX(0.975);transform-origin:right 0;">150,00 $</div>
<div class="t" style="left:512.30px;top:977.83px;width:600px;text-align:right;font-size:13.2px;line-height:13.2px;color:#383838;font-weight:normal;transform:scaleX(0.975);transform-origin:right 0;">114,00 $</div>
<div class="t" style="left:197.00px;top:1009.83px;width:600px;text-align:left;font-size:13.2px;line-height:13.2px;color:#383838;font-weight:normal;transform:scaleX(0.98);transform-origin:left 0;">Dez-17</div>
<div class="t" style="left:-39.70px;top:1009.83px;width:600px;text-align:right;font-size:13.2px;line-height:13.2px;color:#383838;font-weight:normal;transform:scaleX(0.975);transform-origin:right 0;">1 550,00 $</div>
<div class="t" style="left:144.30px;top:1009.83px;width:600px;text-align:right;font-size:13.2px;line-height:13.2px;color:#383838;font-weight:normal;transform:scaleX(0.975);transform-origin:right 0;">1 237,00 $</div>
<div class="t" style="left:328.30px;top:1009.83px;width:600px;text-align:right;font-size:13.2px;line-height:13.2px;color:#383838;font-weight:normal;transform:scaleX(0.975);transform-origin:right 0;">150,00 $</div>
<div class="t" style="left:512.30px;top:1009.83px;width:600px;text-align:right;font-size:13.2px;line-height:13.2px;color:#383838;font-weight:normal;transform:scaleX(0.975);transform-origin:right 0;">163,00 $</div>
<div class="t" style="left:197.00px;top:1041.83px;width:600px;text-align:left;font-size:13.2px;line-height:13.2px;color:#383838;font-weight:bold;">Total</div>
<div class="t" style="left:-39.70px;top:1041.83px;width:600px;text-align:right;font-size:13.2px;line-height:13.2px;color:#383838;font-weight:bold;transform:scaleX(0.965);transform-origin:right 0;">18 527,00 $</div>
<div class="t" style="left:144.30px;top:1041.83px;width:600px;text-align:right;font-size:13.2px;line-height:13.2px;color:#383838;font-weight:bold;transform:scaleX(0.965);transform-origin:right 0;">15 411,00 $</div>
<div class="t" style="left:328.30px;top:1041.83px;width:600px;text-align:right;font-size:13.2px;line-height:13.2px;color:#383838;font-weight:bold;transform:scaleX(0.965);transform-origin:right 0;">1 800,00 $</div>
<div class="t" style="left:512.30px;top:1041.83px;width:600px;text-align:right;font-size:13.2px;line-height:13.2px;color:#383838;font-weight:bold;transform:scaleX(0.965);transform-origin:right 0;">1 316,00 $</div>
<svg style="position:absolute;left:0;top:0" width="186" height="110" shape-rendering="crispEdges"><rect x="116" y="73" width="1" height="1" fill="#fff"/><rect x="126" y="77" width="1" height="1" fill="#fff"/><rect x="123" y="69" width="1" height="1" fill="#fff"/><rect x="118" y="82" width="1" height="1" fill="#fff"/><rect x="113" y="77" width="1" height="1" fill="#fff"/><rect x="117" y="77" width="1" height="1" fill="#fff"/><rect x="119" y="75" width="1" height="1" fill="#fff"/><rect x="120" y="74" width="1" height="1" fill="#fff"/><rect x="119" y="83" width="1" height="1" fill="#fff"/><rect x="124" y="82" width="1" height="1" fill="#fff"/><rect x="126" y="79" width="1" height="1" fill="#fff"/><rect x="129" y="78" width="1" height="1" fill="#fff"/><rect x="115" y="79" width="1" height="1" fill="#fff"/><rect x="130" y="77" width="1" height="1" fill="#fff"/><rect x="121" y="74" width="1" height="1" fill="#fff"/><rect x="123" y="71" width="1" height="1" fill="#fff"/><rect x="122" y="84" width="1" height="1" fill="#fff"/><rect x="120" y="67" width="1" height="1" fill="#fff"/><rect x="128" y="79" width="1" height="1" fill="#fff"/><rect x="119" y="76" width="1" height="1" fill="#fff"/><rect x="120" y="85" width="1" height="1" fill="#fff"/><rect x="121" y="67" width="1" height="1" fill="#fff"/><rect x="118" y="77" width="1" height="1" fill="#fff"/><rect x="121" y="85" width="1" height="1" fill="#fff"/><rect x="127" y="73" width="1" height="1" fill="#fff"/><rect x="119" y="69" width="1" height="1" fill="#fff"/><rect x="120" y="78" width="1" height="1" fill="#fff"/><rect x="124" y="77" width="1" height="1" fill="#fff"/><rect x="126" y="75" width="1" height="1" fill="#fff"/><rect x="126" y="74" width="1" height="1" fill="#fff"/><rect x="118" y="70" width="1" height="1" fill="#fff"/><rect x="121" y="78" width="1" height="1" fill="#fff"/><rect x="113" y="75" width="1" height="1" fill="#fff"/><rect x="113" y="74" width="1" height="1" fill="#fff"/><rect x="122" y="79" width="1" height="1" fill="#fff"/><rect x="117" y="75" width="1" height="1" fill="#fff"/><rect x="120" y="71" width="1" height="1" fill="#fff"/><rect x="128" y="74" width="1" height="1" fill="#fff"/><rect x="119" y="71" width="1" height="1" fill="#fff"/><rect x="120" y="80" width="1" height="1" fill="#fff"/><rect x="124" y="70" width="1" height="1" fill="#fff"/><rect x="130" y="75" width="1" height="1" fill="#fff"/><rect x="123" y="68" width="1" height="1" fill="#fff"/><rect x="118" y="81" width="1" height="1" fill="#fff"/><rect x="122" y="72" width="1" height="1" fill="#fff"/><rect x="122" y="81" width="1" height="1" fill="#fff"/><rect x="120" y="73" width="1" height="1" fill="#fff"/><rect x="124" y="81" width="1" height="1" fill="#fff"/><rect x="126" y="78" width="1" height="1" fill="#fff"/><rect x="116" y="77" width="1" height="1" fill="#fff"/><rect x="130" y="76" width="1" height="1" fill="#fff"/><rect x="118" y="75" width="1" height="1" fill="#fff"/><rect x="118" y="83" width="1" height="1" fill="#fff"/><rect x="113" y="78" width="1" height="1" fill="#fff"/><rect x="122" y="74" width="1" height="1" fill="#fff"/><rect x="114" y="79" width="1" height="1" fill="#fff"/><rect x="128" y="78" width="1" height="1" fill="#fff"/><rect x="124" y="75" width="1" height="1" fill="#fff"/><rect x="124" y="83" width="1" height="1" fill="#fff"/><rect x="116" y="79" width="1" height="1" fill="#fff"/><rect x="122" y="67" width="1" height="1" fill="#fff"/><rect x="120" y="68" width="1" height="1" fill="#fff"/><rect x="122" y="85" width="1" height="1" fill="#fff"/><rect x="123" y="84" width="1" height="1" fill="#fff"/><rect x="119" y="68" width="1" height="1" fill="#fff"/><rect x="115" y="73" width="1" height="1" fill="#fff"/><rect x="126" y="73" width="1" height="1" fill="#fff"/><rect x="118" y="69" width="1" height="1" fill="#fff"/><rect x="122" y="78" width="1" height="1" fill="#fff"/><rect x="123" y="77" width="1" height="1" fill="#fff"/><rect x="114" y="74" width="1" height="1" fill="#fff"/><rect x="112" y="77" width="1" height="1" fill="#fff"/><rect x="128" y="73" width="1" height="1" fill="#fff"/><rect x="119" y="81" width="1" height="1" fill="#fff"/><rect x="124" y="69" width="1" height="1" fill="#fff"/><rect x="125" y="77" width="1" height="1" fill="#fff"/><rect x="116" y="74" width="1" height="1" fill="#fff"/><rect x="116" y="75" width="1" height="1" fill="#fff"/><rect x="118" y="71" width="1" height="1" fill="#fff"/><rect x="129" y="77" width="1" height="1" fill="#fff"/><rect x="122" y="71" width="1" height="1" fill="#fff"/><rect x="122" y="80" width="1" height="1" fill="#fff"/><rect x="127" y="79" width="1" height="1" fill="#fff"/><rect x="124" y="71" width="1" height="1" fill="#fff"/><rect x="120" y="84" width="1" height="1" fill="#fff"/><rect x="119" y="84" width="1" height="1" fill="#fff"/><rect x="122" y="73" width="1" height="1" fill="#fff"/><rect x="123" y="81" width="1" height="1" fill="#fff"/><rect x="114" y="78" width="1" height="1" fill="#fff"/><rect x="119" y="77" width="1" height="1" fill="#fff"/><rect x="116" y="78" width="1" height="1" fill="#fff"/><rect x="123" y="75" width="1" height="1" fill="#fff"/><rect x="112" y="75" width="1" height="1" fill="#fff"/><rect x="123" y="83" width="1" height="1" fill="#fff"/><rect x="120" y="79" width="1" height="1" fill="#fff"/><rect x="125" y="75" width="1" height="1" fill="#fff"/><rect x="129" y="75" width="1" height="1" fill="#fff"/><rect x="129" y="74" width="1" height="1" fill="#fff"/><rect x="122" y="68" width="1" height="1" fill="#fff"/><rect x="123" y="76" width="1" height="1" fill="#fff"/><rect x="114" y="73" width="1" height="1" fill="#fff"/><rect x="112" y="76" width="1" height="1" fill="#fff"/><rect x="120" y="72" width="1" height="1" fill="#fff"/><rect x="120" y="81" width="1" height="1" fill="#fff"/><rect x="125" y="76" width="1" height="1" fill="#000"/><rect x="116" y="76" width="1" height="1" fill="#000"/><rect x="115" y="74" width="1" height="1" fill="#000"/><rect x="115" y="75" width="1" height="1" fill="#000"/><rect x="121" y="69" width="1" height="1" fill="#000"/><rect x="129" y="76" width="1" height="1" fill="#000"/><rect x="115" y="77" width="1" height="1" fill="#000"/><rect x="122" y="70" width="1" height="1" fill="#000"/><rect x="121" y="72" width="1" height="1" fill="#000"/><rect x="118" y="76" width="1" height="1" fill="#000"/><rect x="121" y="81" width="1" height="1" fill="#000"/><rect x="122" y="82" width="1" height="1" fill="#000"/><rect x="121" y="84" width="1" height="1" fill="#000"/><rect x="128" y="75" width="1" height="1" fill="#000"/><rect x="127" y="78" width="1" height="1" fill="#000"/><rect x="128" y="77" width="1" height="1" fill="#000"/><rect x="120" y="83" width="1" height="1" fill="#000"/><rect x="124" y="76" width="1" height="1" fill="#000"/><rect x="115" y="76" width="1" height="1" fill="#000"/><rect x="126" y="76" width="1" height="1" fill="#000"/><rect x="121" y="71" width="1" height="1" fill="#000"/><rect x="121" y="68" width="1" height="1" fill="#000"/><rect x="122" y="69" width="1" height="1" fill="#000"/><rect x="113" y="76" width="1" height="1" fill="#000"/><rect x="121" y="83" width="1" height="1" fill="#000"/><rect x="121" y="80" width="1" height="1" fill="#000"/><rect x="114" y="75" width="1" height="1" fill="#000"/><rect x="127" y="77" width="1" height="1" fill="#000"/><rect x="114" y="77" width="1" height="1" fill="#000"/><rect x="128" y="76" width="1" height="1" fill="#000"/><rect x="127" y="74" width="1" height="1" fill="#000"/><rect x="127" y="75" width="1" height="1" fill="#000"/><rect x="117" y="76" width="1" height="1" fill="#000"/><rect x="119" y="70" width="1" height="1" fill="#000"/><rect x="120" y="70" width="1" height="1" fill="#000"/><rect x="119" y="82" width="1" height="1" fill="#000"/><rect x="120" y="82" width="1" height="1" fill="#000"/><rect x="115" y="78" width="1" height="1" fill="#000"/><rect x="121" y="73" width="1" height="1" fill="#000"/><rect x="121" y="70" width="1" height="1" fill="#000"/><rect x="123" y="70" width="1" height="1" fill="#000"/><rect x="121" y="79" width="1" height="1" fill="#000"/><rect x="121" y="82" width="1" height="1" fill="#000"/><rect x="114" y="76" width="1" height="1" fill="#000"/><rect x="122" y="83" width="1" height="1" fill="#000"/><rect x="123" y="82" width="1" height="1" fill="#000"/><rect x="120" y="69" width="1" height="1" fill="#000"/><rect x="127" y="76" width="1" height="1" fill="#000"/><rect x="121" y="76" width="1" height="1" fill="#000"/><rect x="121" y="77" width="1" height="1" fill="#000"/><rect x="122" y="77" width="1" height="1" fill="#000"/><rect x="121" y="78" width="1" height="1" fill="#000"/><rect x="122" y="78" width="1" height="1" fill="#fff"/><rect x="123" y="78" width="1" height="1" fill="#000"/><rect x="121" y="79" width="1" height="1" fill="#000"/><rect x="122" y="79" width="1" height="1" fill="#fff"/><rect x="123" y="79" width="1" height="1" fill="#fff"/><rect x="124" y="79" width="1" height="1" fill="#000"/><rect x="121" y="80" width="1" height="1" fill="#000"/><rect x="122" y="80" width="1" height="1" fill="#fff"/><rect x="123" y="80" width="1" height="1" fill="#fff"/><rect x="124" y="80" width="1" height="1" fill="#fff"/><rect x="125" y="80" width="1" height="1" fill="#000"/><rect x="121" y="81" width="1" height="1" fill="#000"/><rect x="122" y="81" width="1" height="1" fill="#fff"/><rect x="123" y="81" width="1" height="1" fill="#fff"/><rect x="124" y="81" width="1" height="1" fill="#fff"/><rect x="125" y="81" width="1" height="1" fill="#fff"/><rect x="126" y="81" width="1" height="1" fill="#000"/><rect x="121" y="82" width="1" height="1" fill="#000"/><rect x="122" y="82" width="1" height="1" fill="#fff"/><rect x="123" y="82" width="1" height="1" fill="#fff"/><rect x="124" y="82" width="1" height="1" fill="#fff"/><rect x="125" y="82" width="1" height="1" fill="#fff"/><rect x="126" y="82" width="1" height="1" fill="#fff"/><rect x="127" y="82" width="1" height="1" fill="#000"/><rect x="121" y="83" width="1" height="1" fill="#000"/><rect x="122" y="83" width="1" height="1" fill="#fff"/><rect x="123" y="83" width="1" height="1" fill="#fff"/><rect x="124" y="83" width="1" height="1" fill="#fff"/><rect x="125" y="83" width="1" height="1" fill="#fff"/><rect x="126" y="83" width="1" height="1" fill="#fff"/><rect x="127" y="83" width="1" height="1" fill="#fff"/><rect x="128" y="83" width="1" height="1" fill="#000"/><rect x="121" y="84" width="1" height="1" fill="#000"/><rect x="122" y="84" width="1" height="1" fill="#fff"/><rect x="123" y="84" width="1" height="1" fill="#fff"/><rect x="124" y="84" width="1" height="1" fill="#fff"/><rect x="125" y="84" width="1" height="1" fill="#fff"/><rect x="126" y="84" width="1" height="1" fill="#fff"/><rect x="127" y="84" width="1" height="1" fill="#fff"/><rect x="128" y="84" width="1" height="1" fill="#fff"/><rect x="129" y="84" width="1" height="1" fill="#000"/><rect x="121" y="85" width="1" height="1" fill="#000"/><rect x="122" y="85" width="1" height="1" fill="#fff"/><rect x="123" y="85" width="1" height="1" fill="#fff"/><rect x="124" y="85" width="1" height="1" fill="#fff"/><rect x="125" y="85" width="1" height="1" fill="#fff"/><rect x="126" y="85" width="1" height="1" fill="#fff"/><rect x="127" y="85" width="1" height="1" fill="#fff"/><rect x="128" y="85" width="1" height="1" fill="#fff"/><rect x="129" y="85" width="1" height="1" fill="#fff"/><rect x="130" y="85" width="1" height="1" fill="#000"/><rect x="121" y="86" width="1" height="1" fill="#000"/><rect x="122" y="86" width="1" height="1" fill="#fff"/><rect x="123" y="86" width="1" height="1" fill="#fff"/><rect x="124" y="86" width="1" height="1" fill="#fff"/><rect x="125" y="86" width="1" height="1" fill="#fff"/><rect x="126" y="86" width="1" height="1" fill="#fff"/><rect x="127" y="86" width="1" height="1" fill="#000"/><rect x="128" y="86" width="1" height="1" fill="#000"/><rect x="129" y="86" width="1" height="1" fill="#000"/><rect x="130" y="86" width="1" height="1" fill="#000"/><rect x="131" y="86" width="1" height="1" fill="#000"/><rect x="121" y="87" width="1" height="1" fill="#000"/><rect x="122" y="87" width="1" height="1" fill="#fff"/><rect x="123" y="87" width="1" height="1" fill="#fff"/><rect x="124" y="87" width="1" height="1" fill="#000"/><rect x="125" y="87" width="1" height="1" fill="#fff"/><rect x="126" y="87" width="1" height="1" fill="#fff"/><rect x="127" y="87" width="1" height="1" fill="#000"/><rect x="121" y="88" width="1" height="1" fill="#000"/><rect x="122" y="88" width="1" height="1" fill="#fff"/><rect x="123" y="88" width="1" height="1" fill="#000"/><rect x="125" y="88" width="1" height="1" fill="#000"/><rect x="126" y="88" width="1" height="1" fill="#fff"/><rect x="127" y="88" width="1" height="1" fill="#fff"/><rect x="128" y="88" width="1" height="1" fill="#000"/><rect x="121" y="89" width="1" height="1" fill="#000"/><rect x="122" y="89" width="1" height="1" fill="#000"/><rect x="125" y="89" width="1" height="1" fill="#000"/><rect x="126" y="89" width="1" height="1" fill="#fff"/><rect x="127" y="89" width="1" height="1" fill="#fff"/><rect x="128" y="89" width="1" height="1" fill="#000"/><rect x="121" y="90" width="1" height="1" fill="#000"/><rect x="126" y="90" width="1" height="1" fill="#000"/><rect x="127" y="90" width="1" height="1" fill="#fff"/><rect x="128" y="90" width="1" height="1" fill="#fff"/><rect x="129" y="90" width="1" height="1" fill="#000"/><rect x="126" y="91" width="1" height="1" fill="#000"/><rect x="127" y="91" width="1" height="1" fill="#fff"/><rect x="128" y="91" width="1" height="1" fill="#fff"/><rect x="129" y="91" width="1" height="1" fill="#000"/><rect x="127" y="92" width="1" height="1" fill="#000"/><rect x="128" y="92" width="1" height="1" fill="#fff"/><rect x="129" y="92" width="1" height="1" fill="#fff"/><rect x="130" y="92" width="1" height="1" fill="#000"/><rect x="127" y="93" width="1" height="1" fill="#000"/><rect x="128" y="93" width="1" height="1" fill="#fff"/><rect x="129" y="93" width="1" height="1" fill="#fff"/><rect x="130" y="93" width="1" height="1" fill="#000"/><rect x="128" y="94" width="1" height="1" fill="#000"/><rect x="129" y="94" width="1" height="1" fill="#000"/></svg>
<svg style="position:absolute;left:490px;top:944px" width="24" height="24" shape-rendering="crispEdges">
<rect x="8" y="4" width="7" height="15" fill="#000"/>
<rect x="4" y="8" width="15" height="7" fill="#000"/>
<rect x="9" y="5" width="4" height="12" fill="#fff"/>
<rect x="5" y="9" width="12" height="4" fill="#fff"/>
</svg>
</body></html>
